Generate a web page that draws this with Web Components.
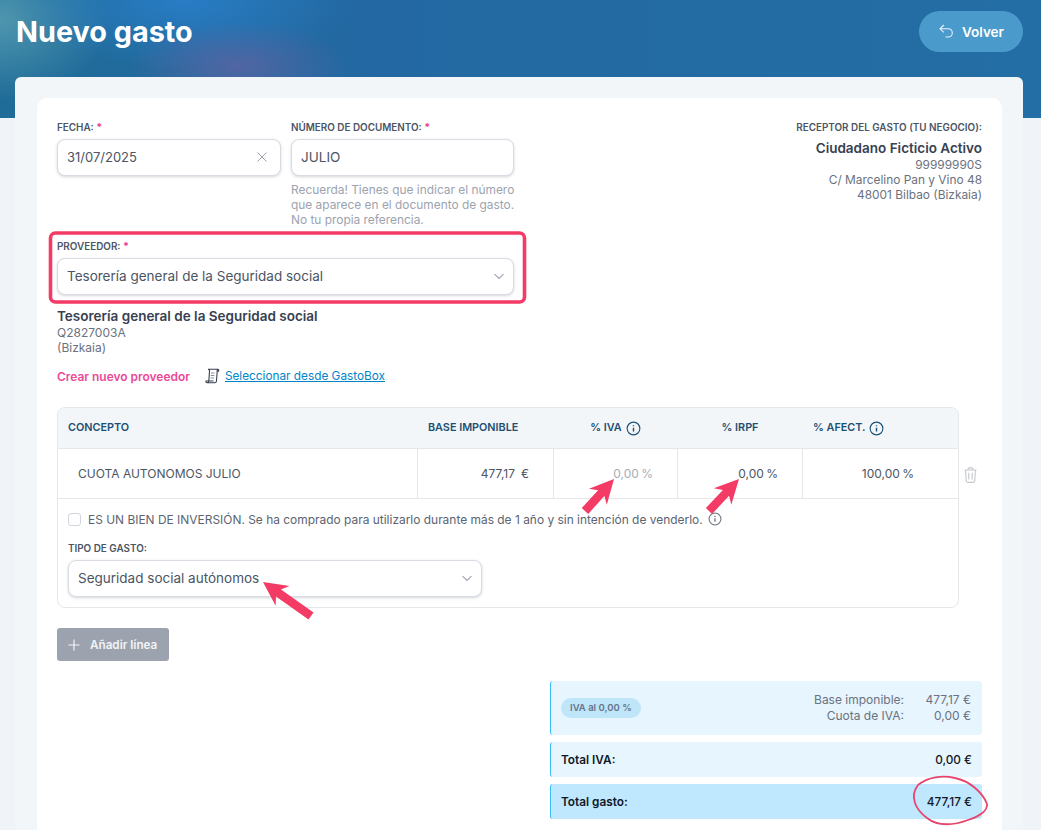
<!DOCTYPE html>
<html lang="es">
<head>
<meta charset="utf-8">
<title>Nuevo gasto</title>
<style>
  html, body { margin: 0; height: 830px; overflow: hidden; }
  body { position: relative; background: #f0f3f8; font-family: Inter, "Liberation Sans", sans-serif; color: #4b5563; }
</style>
</head>
<body>
<page-header title="Nuevo gasto"></page-header>
<page-shell>
  <expense-form></expense-form>
</page-shell>
<annotation-layer></annotation-layer>

<script>
const chevron = `<svg width="12" height="12" viewBox="0 0 12 12" fill="none" stroke="#9ca3af" stroke-width="1.1"><path d="M1.5 4.200L6 8.500l4.500-4.300"/></svg>`;
const info = (s, c) => `<svg width="${s}" height="${s}" viewBox="0 0 16 16" fill="none" stroke="${c}" stroke-width="1.2"><circle cx="8" cy="8" r="6.8"/><path d="M8 7.200v4M8 4.400v1.200" stroke-width="1.5"/></svg>`;

class PageHeader extends HTMLElement {
  connectedCallback() {
    this.attachShadow({ mode: 'open' }).innerHTML = `
<style>
  :host { display: block; height: 118px; box-sizing: border-box; padding: 11px 18px 0 16px;
    background:
      radial-gradient(ellipse 110px 45px at 238px 66px, rgba(100,100,165,.72), transparent),
      radial-gradient(ellipse 170px 70px at 185px 0, rgba(42,128,205,.85), transparent),
      radial-gradient(ellipse 110px 80px at 0 20px, rgba(90,160,180,.8), transparent),
      linear-gradient(90deg, #1f6c98 0, #2368a2 35%, #236ea4 100%); }
  .row { display: flex; justify-content: space-between; align-items: flex-start; }
  h1 { margin: 5px 0 0; font: 700 28.800px/32px Inter, sans-serif; color: #fff; }
  button { display: flex; align-items: center; gap: 8px; width: 104px; height: 41px; padding: 0 0 0 20px; box-sizing: border-box;
    border: 0; border-radius: 21px; background: #4a9acc; color: #fff; font: 600 13.500px Inter, sans-serif; }
</style>
<div class="row">
  <h1>${this.getAttribute('title')}</h1>
  <button><svg width="15" height="15" viewBox="0 0 15 15" fill="none" stroke="#e8f2f9" stroke-width="1.1"><path d="M4.800 1L1 4.800l3.800 3.600M1 4.800h8.200a4.100 4.100 0 0 1 0 8.200H6.500"/></svg>Volver</button>
</div>`;
  }
}
customElements.define('page-header', PageHeader);

class PageShell extends HTMLElement {
  connectedCallback() {
    this.attachShadow({ mode: 'open' }).innerHTML = `
<style>
  :host { display: block; margin: -41px 18px 0 15px; height: 760px; padding: 21px 21px 0 22px; box-sizing: border-box;
    background: #f3f6f9; border-radius: 6px 6px 0 0; }
  .inner { background: #fff; border-radius: 10px; height: 100%; }
</style>
<div class="inner"><slot></slot></div>`;
  }
}
customElements.define('page-shell', PageShell);

class FormField extends HTMLElement {
  connectedCallback() {
    const req = this.hasAttribute('required') ? ' <b>*</b>' : '';
    this.attachShadow({ mode: 'open' }).innerHTML = `
<style>
  :host { display: block; }
  label { display: block; font: 600 9.900px/14px Inter, sans-serif; color: #4b5563; margin-bottom: 5px; }
  b { color: #ec4899; }
</style>
<label>${this.getAttribute('label')}${req}</label>
<slot></slot>`;
  }
}
customElements.define('form-field', FormField);

class FieldBox extends HTMLElement {
  connectedCallback() {
    const icon = this.getAttribute('icon');
    const glyph = icon === 'clear'
      ? `<svg class="x" width="10" height="10" viewBox="0 0 10 10" fill="none" stroke="#9ca3af" stroke-width="1"><path d="M.5.5l9 9M9.500.5l-9 9"/></svg>`
      : icon === 'chevron' ? chevron : '';
    const size = this.getAttribute('size') || '13.5';
    this.attachShadow({ mode: 'open' }).innerHTML = `
<style>
  :host { display: flex; align-items: center; justify-content: space-between; height: 37px; box-sizing: border-box;
    padding: 0 8px 2px 9px; background: #fff; border: 1px solid #d8dbe2; border-radius: 8px;
    box-shadow: 0 1px 3px rgba(60,70,90,.22); font: 400 ${size}px Inter, sans-serif; color: #4b5563; }
  svg { display: block; }
  .x { margin-right: 5px; }
</style>
<slot></slot>${glyph}`;
  }
}
customElements.define('field-box', FieldBox);

class ReceptorInfo extends HTMLElement {
  connectedCallback() {
    this.attachShadow({ mode: 'open' }).innerHTML = `
<style>
  :host { display: block; text-align: right; font: 400 11.900px/15px Inter, sans-serif; color: #6b7280; }
  h4 { margin: 0 0 5px; font: 600 9.900px/14px Inter, sans-serif; color: #4b5563; }
  strong { display: block; font: 600 13.500px/18px Inter, sans-serif; color: #374151; }
</style>
<h4>RECEPTOR DEL GASTO (TU NEGOCIO):</h4>
<strong>Ciudadano Ficticio Activo</strong>
<div>99999990S</div>
<div>C/ Marcelino Pan y Vino 48</div>
<div>48001 Bilbao (Bizkaia)</div>`;
  }
}
customElements.define('receptor-info', ReceptorInfo);

class LineTable extends HTMLElement {
  connectedCallback() {
    this.attachShadow({ mode: 'open' }).innerHTML = `
<style>
  :host { display: flex; align-items: flex-start; gap: 5px; }
  .table { width: 902px; box-sizing: border-box; border: 1px solid #e5e7eb; border-radius: 8px; overflow: hidden; }
  .cols { display: grid; grid-template-columns: 359px 136px 124px 125px 156px; }
  .head { height: 40px; background: #f3f6f9; border-bottom: 1px solid #e5e7eb; align-items: center;
    font: 600 10.800px/14px Inter, sans-serif; color: #1d4f73; }
  .head div { display: flex; align-items: center; gap: 4px; }
  .head div:first-child { padding-left: 10px; }
  .head .c2 { padding-left: 11px; }
  .head .c3 { justify-content: center; padding-left: 1px; }
  .head .c4 { justify-content: center; padding-left: 1px; }
  .head .c5 { padding-left: 11px; }
  .row { height: 49px; border-bottom: 1px solid #e5e7eb; font: 400 12px Inter, sans-serif; color: #4b5563; }
  .row div { display: flex; align-items: center; justify-content: flex-end; border-left: 1px solid #e5e7eb; padding-bottom: 1px; }
  .row div:first-child { justify-content: flex-start; border-left: 0; padding-left: 20px; }
  .row .b { padding-right: 24px; gap: 6px; }
  .row .i { padding-right: 24px; color: #a8adb5; word-spacing: -1px; }
  .row .p { padding-right: 24px; word-spacing: -1px; }
  .row .a { padding-right: 44px; word-spacing: -1px; }
  .extra { padding: 13px 10px 10px; }
  .check { display: flex; align-items: center; gap: 7px; height: 14px; font: 400 11.950px Inter, sans-serif; color: #5b6472; margin-bottom: 15px; white-space: nowrap; }
  .box { width: 13px; height: 13px; border: 1px solid #d1d5db; border-radius: 3px; box-sizing: border-box; }
  .check svg { margin-left: -2px; }
  .tipo { width: 414px; }
  .trash { margin-top: 60px; }
</style>
<div class="table">
  <div class="cols head">
    <div>CONCEPTO</div><div class="c2">BASE IMPONIBLE</div>
    <div class="c3">% IVA ${info(15, '#1d4f73')}</div>
    <div class="c4">% IRPF</div>
    <div class="c5">% AFECT. ${info(15, '#1d4f73')}</div>
  </div>
  <div class="cols row">
    <div>CUOTA AUTONOMOS JULIO</div>
    <div class="b">477,17 <span>€</span></div>
    <div class="i">0,00 %</div>
    <div class="p">0,00 %</div>
    <div class="a">100,00 %</div>
  </div>
  <div class="extra">
    <div class="check"><span class="box"></span>ES UN BIEN DE INVERSIÓN. Se ha comprado para utilizarlo durante más de 1 año y sin intención de venderlo. ${info(14, '#6b7280')}</div>
    <form-field class="tipo" label="TIPO DE GASTO:"><field-box icon="chevron">Seguridad social autónomos</field-box></form-field>
  </div>
</div>
<svg class="trash" width="13" height="16" viewBox="0 0 13 16" fill="none" stroke="#c4c7cc" stroke-width="1.100"><path d="M.5 3h12M3.800 2.800C4 1.500 5 .6 6.500.6S9 1.500 9.200 2.800M1.600 3l.6 10.800c.1.900.7 1.600 1.600 1.600h5.400c.9 0 1.500-.7 1.600-1.600L11.400 3M4.800 5.800v6.700M8.200 5.800v6.700"/></svg>`;
  }
}
customElements.define('line-table', LineTable);

class TotalsPanel extends HTMLElement {
  connectedCallback() {
    this.attachShadow({ mode: 'open' }).innerHTML = `
<style>
  :host { display: flex; flex-direction: column; gap: 7px; width: 432px; font: 400 12px/16px Inter, sans-serif; }
  .band { display: flex; align-items: center; justify-content: space-between; box-sizing: border-box; padding: 0 10px 0 10px;
    background: #e6f5fe; border-left: 1.500px solid #38bdf8; border-radius: 3px; color: #111827; height: 35px; }
  .lbl { font-size: 11.800px; font-weight: 600; }
  .val { font-size: 11.800px; font-weight: 500; }
  .band.vat { height: 54px; color: #6b7280; padding-right: 11px; }
  .band.total { background: #bfe7fd; }
  .pill { background: #bfe5f9; border-radius: 10px; padding: 2px 9px; font: 600 9.500px/16px Inter, sans-serif; color: #64748b; }
  dl { display: grid; grid-template-columns: auto 67px; margin: 0; text-align: right; }
  dd { margin: 0; }
</style>
<div class="band vat">
  <span class="pill">IVA al 0,00 %</span>
  <dl><dt>Base imponible:</dt><dd>477,17 €</dd><dt>Cuota de IVA:</dt><dd>0,00 €</dd></dl>
</div>
<div class="band"><span class="lbl">Total IVA:</span><span class="val">0,00 €</span></div>
<div class="band total"><span class="lbl">Total gasto:</span><span class="val">477,17 €</span></div>`;
  }
}
customElements.define('totals-panel', TotalsPanel);

class ExpenseForm extends HTMLElement {
  connectedCallback() {
    this.attachShadow({ mode: 'open' }).innerHTML = `
<style>
  :host { display: block; padding: 22px 20px 0; font-family: Inter, sans-serif; }
  .top { display: flex; justify-content: space-between; align-items: flex-start; }
  .left { width: 457px; }
  .pair { display: grid; grid-template-columns: 224px 223px; gap: 10px; }
  .hint { margin: 6px 0 0; font: 400 11.900px/15px Inter, sans-serif; color: #9ca3af; white-space: nowrap; }
  .prov { margin-top: 12px; }
  .prov-data { margin-top: 12px; font: 400 12px/15px Inter, sans-serif; color: #6b7280; }
  .prov-data strong { display: block; font: 600 13.500px/18px Inter, sans-serif; color: #374151; }
  .links { display: flex; align-items: center; margin-top: 11px; height: 20px; white-space: nowrap; }
  .new { font: 600 11.950px Inter, sans-serif; color: #ec4899; margin-right: 15px; }
  .links a { font: 400 11.800px Inter, sans-serif; color: #0284c7; text-decoration: underline; margin-left: 5px; }
  line-table { margin-top: 21px; }
  .add { display: flex; align-items: center; gap: 10px; width: 112px; height: 33px; margin-top: 20px; padding: 0 0 0 11px; box-sizing: border-box;
    border: 0; border-radius: 3px; background: #9ca3af; color: #f3f4f6; font: 600 11.700px Inter, sans-serif; }
  .right { display: flex; justify-content: flex-end; margin-top: 20px; }
</style>
<div class="top">
  <div class="left">
    <div class="pair">
      <form-field label="FECHA:" required><field-box icon="clear" size="13">31/07/2025</field-box></form-field>
      <form-field label="NÚMERO DE DOCUMENTO:" required>
        <field-box>JULIO</field-box>
        <p class="hint">Recuerda! Tienes que indicar el número<br>que aparece en el documento de gasto.<br>No tu propia referencia.</p>
      </form-field>
    </div>
    <form-field class="prov" label="PROVEEDOR:" required><field-box icon="chevron">Tesorería general de la Seguridad social</field-box></form-field>
    <div class="prov-data"><strong>Tesorería general de la Seguridad social</strong>Q2827003A<br>(Bizkaia)</div>
    <div class="links">
      <span class="new">Crear nuevo proveedor</span>
      <svg width="15" height="16" viewBox="0 0 15 16" fill="none" stroke="#374151" stroke-width="1.100"><path d="M3 1.200h9.600c1 0 1.400 1 1 1.900h-2M3 1.200c1 0 1.700 1 1.500 2.200L3.800 13c-.1 1-.8 1.800-1.800 1.800h7.800c1 0 1.600-.8 1.700-1.800l.8-11.200M2 14.800c-.8 0-1.300-.7-1-1.800h7.500"/><path d="M6 5h3.500M5.800 7.500h3.500M5.600 10h3.500" stroke-width=".6"/></svg>
      <a>Seleccionar desde GastoBox</a>
    </div>
  </div>
  <receptor-info></receptor-info>
</div>
<line-table></line-table>
<button class="add"><svg width="12" height="12" viewBox="0 0 12 12" stroke="#f3f4f6" stroke-width="1.200"><path d="M6 .5v11M.5 6h11"/></svg>Añadir línea</button>
<div class="right"><totals-panel></totals-panel></div>`;
  }
}
customElements.define('expense-form', ExpenseForm);

class AnnotationLayer extends HTMLElement {
  connectedCallback() {
    const arrow = (x1, y1, x2, y2) => {
      const a = Math.atan2(y2 - y1, x2 - x1), c = Math.cos(a), s = Math.sin(a);
      const p = (d, w) => `${(x2 - c * d - s * w).toFixed(1)},${(y2 - s * d + c * w).toFixed(1)}`;
      const len = Math.hypot(x2 - x1, y2 - y1);
      return `<polygon points="${x2},${y2} ${p(24, 12)} ${p(19, 4.3)} ${p(len, 4.3)} ${p(len, -4.3)} ${p(19, -4.3)} ${p(24, -12)}"/>`;
    };
    this.attachShadow({ mode: 'open' }).innerHTML = `
<style>
  :host { position: absolute; inset: 0; pointer-events: none; }
  svg { display: block; }
</style>
<svg width="1041" height="830" viewBox="0 0 1041 830">
  <rect x="50.500" y="233" width="474" height="69" rx="5" fill="none" stroke="#f43b66" stroke-width="3.600"/>
  <g fill="#f43b66">
    ${arrow(585, 511, 614, 479)}
    ${arrow(709, 511, 739, 479)}
    ${arrow(311, 616, 263, 582)}
  </g>
  <path d="M918 785C928 777 942 775 955 778C970 781 983 793 987 804C988 811 978 817 968 820C955 825 938 827 927 818C916 810 909 797 918 785" fill="none" stroke="#e8456e" stroke-width="1.800"/>
</svg>`;
  }
}
customElements.define('annotation-layer', AnnotationLayer);
</script>
</body>
</html>
